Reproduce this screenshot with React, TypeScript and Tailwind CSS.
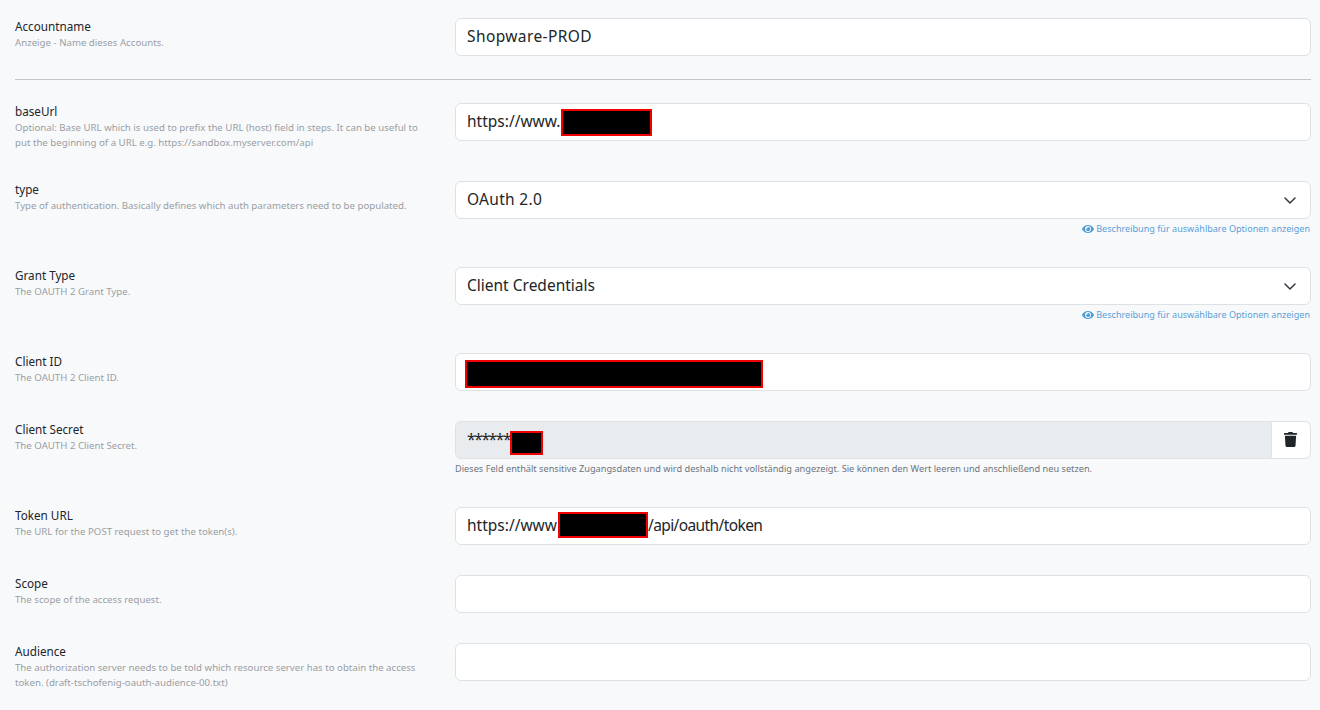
import { FaEye, FaTrash } from "react-icons/fa";
import type { ReactNode } from "react";

function Redact({ className }: { className: string }) {
  return <span className={`inline-block shrink-0 bg-black border-2 border-[#f00000] ${className}`} />;
}

function Label({ title, desc }: { title: string; desc: ReactNode }) {
  return (
    <div className="w-[410px] shrink-0 mr-[30px] pb-[1px]">
      <div className="text-[11.7px] leading-[17px] text-[#212529]">{title}</div>
      <div className="text-[9.67px] leading-[15px] text-[#9a9ea3]">{desc}</div>
    </div>
  );
}

function Field({ children, chevron }: { children?: ReactNode; chevron?: boolean }) {
  return (
    <div className="h-[38px] flex items-center bg-white border border-[#dee2e6] rounded-[6px] pl-[11px] pr-3 text-[15.5px] text-[#212529]">
      <span className="flex items-center flex-1 whitespace-nowrap">{children}</span>
      {chevron && (
        <svg width="12" height="7" viewBox="0 0 12 7" fill="none" stroke="#343a40" strokeWidth="1.5" strokeLinecap="round" strokeLinejoin="round" className="mr-[2px]">
          <path d="M1 1l5 5 5-5" />
        </svg>
      )}
    </div>
  );
}

function Hint() {
  return (
    <div className="flex items-center justify-end gap-[2px] h-[18px] pt-[1px] pr-[1px] text-[9.07px] text-[#5a9fd8]">
      <FaEye className="text-[12px] text-[#4a9ad4]" />
      <span>Beschreibung für auswählbare Optionen anzeigen</span>
    </div>
  );
}

function Row({ title, desc, children }: { title: string; desc: ReactNode; children: ReactNode }) {
  return (
    <div className="flex mb-[30px]">
      <Label title={title} desc={desc} />
      <div className="flex-1 min-w-0">{children}</div>
    </div>
  );
}

export default function App() {
  return (
    <div className="h-[710px] overflow-hidden bg-[#f8f9fb] pt-[18px] pl-[15px] pr-[9px]" style={{ fontFamily: '"Noto Sans", sans-serif' }}>
      <div className="flex mb-[23px]">
        <Label title="Accountname" desc="Anzeige - Name dieses Accounts." />
        <div className="flex-1 min-w-0"><Field><span className="tracking-[0.4px]">Shopware-PROD</span></Field></div>
      </div>
      <div className="h-px bg-[#c4c6c9] mb-[23px]" />
      <Row title="baseUrl" desc="Optional: Base URL which is used to prefix the URL (host) field in steps. It can be useful to put the beginning of a URL e.g. https://sandbox.myserver.com/api">
        <Field><span>https://www.</span><Redact className="w-[91px] h-[27px]" /></Field>
      </Row>
      <Row title="type" desc="Type of authentication. Basically defines which auth parameters need to be populated.">
        <Field chevron><span className="tracking-[0.3px]">OAuth 2.0</span></Field>
        <Hint />
      </Row>
      <Row title="Grant Type" desc="The OAUTH 2 Grant Type.">
        <Field chevron><span>Client Credentials</span></Field>
        <Hint />
      </Row>
      <Row title="Client ID" desc="The OAUTH 2 Client ID.">
        <Field><Redact className="w-[298px] h-[28px] -ml-[2px] mt-[4px]" /></Field>
      </Row>
      <Row title="Client Secret" desc="The OAUTH 2 Client Secret.">
        <div className="flex h-[38px]">
          <div className="flex-1 flex items-center bg-[#e9ecef] border border-[#dee2e6] rounded-l-[6px] pl-[11px] pr-3 text-[15.5px] text-[#212529]">
            <span className="tracking-[-1.35px]">******</span>
            <Redact className="w-[33px] h-[24px] mt-[6px]" />
          </div>
          <div className="w-[39px] flex items-center justify-center bg-white border border-l-0 border-[#dee2e6] rounded-r-[6px] text-[#212529]">
            <FaTrash className="text-[15px] -mt-[2px] -ml-[2px]" />
          </div>
        </div>
        <div className="h-[18px] pt-[2px] flex items-center text-[9.2px] text-[#6c757d] whitespace-nowrap">
          Dieses Feld enthält sensitive Zugangsdaten und wird deshalb nicht vollständig angezeigt. Sie können den Wert leeren und anschließend neu setzen.
        </div>
      </Row>
      <Row title="Token URL" desc="The URL for the POST request to get the token(s).">
        <Field><span>https://www</span><Redact className="w-[90px] h-[26px] -mt-[2px] ml-[1px]" /><span className="tracking-[-0.6px]">/api/oauth/token</span></Field>
      </Row>
      <Row title="Scope" desc="The scope of the access request.">
        <Field />
      </Row>
      <Row title="Audience" desc="The authorization server needs to be told which resource server has to obtain the access token. (draft-tschofenig-oauth-audience-00.txt)">
        <Field />
      </Row>
    </div>
  );
}
